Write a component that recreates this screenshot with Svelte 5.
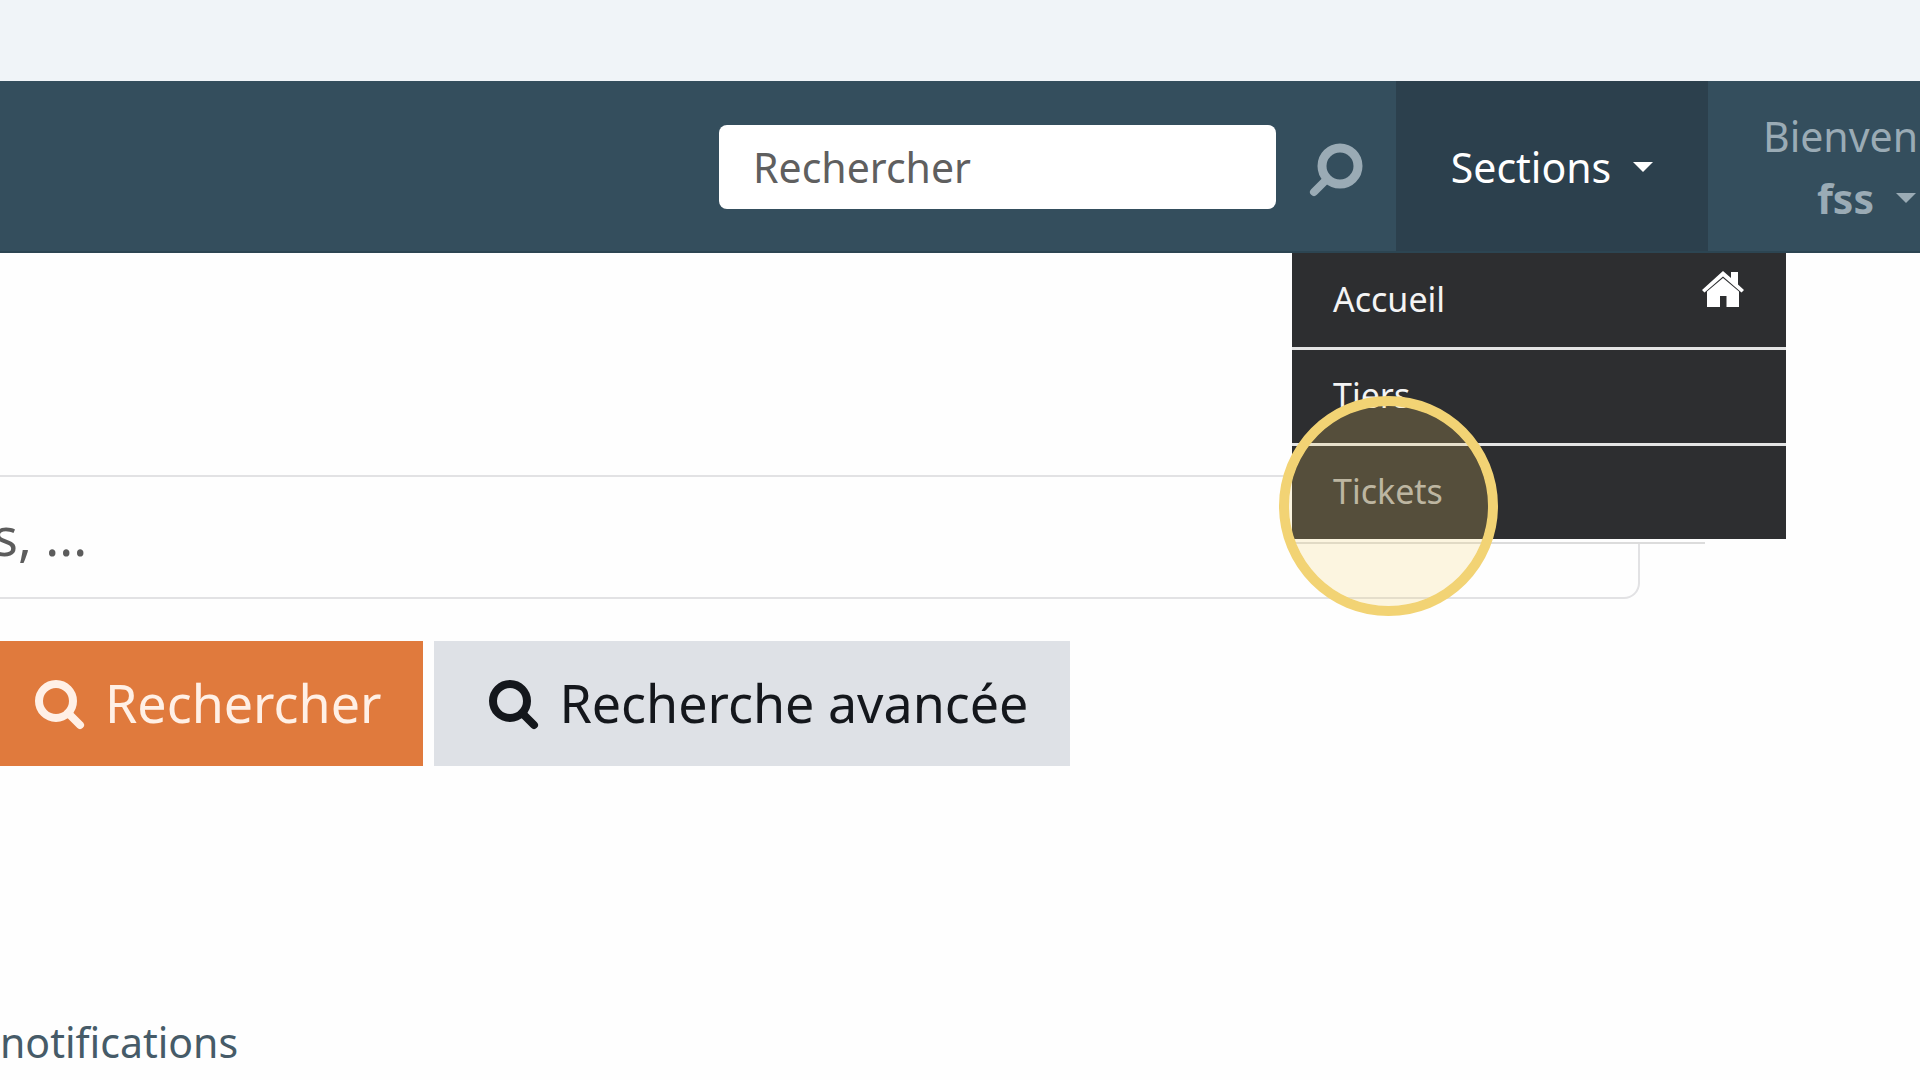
<script lang="ts">
  let query = '';
  let keywords = '';

  const sections = [
    { label: 'Accueil', icon: 'home', active: false },
    { label: 'Tiers', icon: '', active: false },
    { label: 'Tickets', icon: '', active: true }
  ];
</script>

<div class="page">
  <header class="navbar">
    <form class="nav-search" role="search" on:submit|preventDefault>
      <input type="text" class="nav-input" placeholder="Rechercher" aria-label="Rechercher" bind:value={query} />
      <button type="submit" class="nav-submit" aria-label="Lancer la recherche">
        <svg width="54" height="54" viewBox="0 0 54 54" fill="none" stroke="currentColor">
          <circle cx="31" cy="26" r="18" stroke-width="9" />
          <path d="M17.500 39.500 L5 52" stroke-width="8" stroke-linecap="round" />
        </svg>
      </button>
    </form>

    <nav class="sections">
      <button type="button" class="sections-toggle" aria-expanded="true">
        Sections
        <span class="caret"></span>
      </button>
      <ul class="menu">
        {#each sections as section}
          <li class="menu-item" class:active={section.active}>
            <a href="#{section.label.toLowerCase()}">{section.label}</a>
            {#if section.icon === 'home'}
              <svg class="home" width="42" height="36" viewBox="0 0 42 36" fill="currentColor">
                <path d="M21 0 L29 7 V1 H36 V13.500 L42 19 L39.500 21.500 L21 5.500 L2.500 21.500 L0 19 Z" />
                <path d="M21 7 L37 20.500 V36 H24.500 V25 H18 V36 H5 V20.500 Z" />
              </svg>
            {/if}
            {#if section.active}
              <span class="highlight"></span>
            {/if}
          </li>
        {/each}
      </ul>
    </nav>

    <button type="button" class="user">
      <span class="welcome">Bienven</span>
      <span class="name">fss <span class="caret"></span></span>
    </button>
  </header>

  <main>
    <form on:submit|preventDefault>
      <input type="text" class="main-input" placeholder="s, ..." aria-label="Mots-clés" bind:value={keywords} />
      <div class="actions">
        <button type="submit" class="btn btn-primary">
          <svg width="52" height="52" viewBox="0 0 52 52" fill="none" stroke="currentColor">
            <circle cx="23" cy="25" r="17" stroke-width="8" />
            <path d="M35 37 L47 49" stroke-width="8" stroke-linecap="round" />
          </svg>
          Rechercher
        </button>
        <button type="button" class="btn btn-secondary">
          <svg width="52" height="52" viewBox="0 0 52 52" fill="none" stroke="currentColor">
            <circle cx="23" cy="25" r="17" stroke-width="8" />
            <path d="M35 37 L47 49" stroke-width="8" stroke-linecap="round" />
          </svg>
          Recherche avancée
        </button>
      </div>
    </form>

    <p class="notifications">notifications</p>
  </main>
</div>

<style>
  :global(body) {
    background: #fefefe;
  }

  .page {
    min-height: 100vh;
    padding-top: 81px;
    box-sizing: border-box;
    overflow: hidden;
    background: linear-gradient(#f0f4f8 81px, #fefefe 81px);
    font-family: "Noto Sans", "Open Sans", sans-serif;
    font-size: 41px;
  }

  button,
  input {
    margin: 0;
    padding: 0;
    border: none;
    box-sizing: border-box;
    font: inherit;
  }

  button {
    background: none;
    cursor: pointer;
  }

  svg {
    display: block;
    flex: none;
    overflow: visible;
  }

  .navbar {
    display: flex;
    justify-content: flex-end;
    height: 172px;
    box-sizing: border-box;
    border-bottom: 2px solid #2c4552;
    background: #344e5d;
  }

  .nav-search {
    display: flex;
    align-items: center;
    gap: 33px;
    margin-right: 33px;
    padding-top: 2px;
  }

  .nav-input {
    width: 557px;
    height: 84px;
    padding: 0 34px;
    border-radius: 8px;
    background: #fff;
    color: #555;
  }

  .nav-input::placeholder {
    color: #5f5f5f;
    opacity: 1;
  }

  .nav-submit {
    color: #9aabb5;
  }

  .sections {
    position: relative;
    display: flex;
    width: 312px;
  }

  .sections-toggle {
    display: flex;
    flex: 1;
    align-items: center;
    justify-content: center;
    gap: 22px;
    padding-top: 2px;
    background: #2c404d;
    color: #fff;
  }

  .caret {
    border: 10px solid transparent;
    border-top-color: currentColor;
    border-bottom: none;
  }

  .menu {
    position: absolute;
    top: 172px;
    right: -78px;
    display: flex;
    flex-direction: column;
    width: 494px;
    margin: 0;
    padding: 0;
    border-top: 1px solid #2d2e30;
    list-style: none;
    font-size: 34px;
    z-index: 10;
  }

  .menu::after {
    content: "";
    width: 413px;
    height: 2px;
    background: #dcdcdc;
  }

  .menu-item {
    position: relative;
    display: flex;
    align-items: flex-start;
    justify-content: space-between;
    height: 96px;
    padding: 17px 42px 0 41px;
    box-sizing: border-box;
    border-bottom: 3px solid #e4e4e4;
    background: #2d2e30;
    color: #fff;
  }

  .menu-item:last-of-type {
    border-bottom-color: #fefefe;
  }

  .menu-item a {
    flex: 1;
    color: #f4f4f4;
    line-height: 56px;
    text-decoration: none;
  }

  .menu-item.active a {
    color: #b0b0b0;
  }

  .highlight {
    position: absolute;
    top: -50px;
    left: -13px;
    width: 219px;
    height: 220px;
    box-sizing: border-box;
    border: 10px solid #f2d374;
    border-radius: 50%;
    background: rgba(244, 211, 106, 0.2);
    background-clip: padding-box;
    pointer-events: none;
    z-index: 1;
  }

  .user {
    display: flex;
    flex-direction: column;
    justify-content: center;
    width: 212px;
    padding: 2px 0 0 55px;
    overflow: hidden;
    color: #9aabb5;
    line-height: 62px;
    text-align: left;
    white-space: nowrap;
  }

  .name {
    display: flex;
    align-items: center;
    gap: 22px;
    padding-left: 54px;
    font-weight: bold;
  }

  .main-input {
    display: block;
    width: calc(100% - 273px);
    height: 124px;
    margin: 222px 0 0 -7px;
    padding-bottom: 3px;
    border: 2px solid #e2e2e4;
    border-left: none;
    border-radius: 0 16px 16px 0;
    background: transparent;
    color: #555;
    font-size: 52px;
  }

  .main-input::placeholder {
    color: #5c5c5c;
    opacity: 1;
  }

  .actions {
    display: flex;
    gap: 11px;
    margin: 42px 0 0 -20px;
  }

  .btn {
    display: flex;
    align-items: center;
    gap: 20px;
    height: 125px;
    padding: 0 42px 3px 53px;
    font-size: 52px;
    white-space: nowrap;
  }

  .btn-primary {
    background: #e07a3d;
    color: #fff0e6;
  }

  .btn-secondary {
    background: #dee1e6;
    color: #14171c;
  }

  .notifications {
    margin: 248px 0 0;
    color: #465b68;
    line-height: 56px;
  }
</style>
